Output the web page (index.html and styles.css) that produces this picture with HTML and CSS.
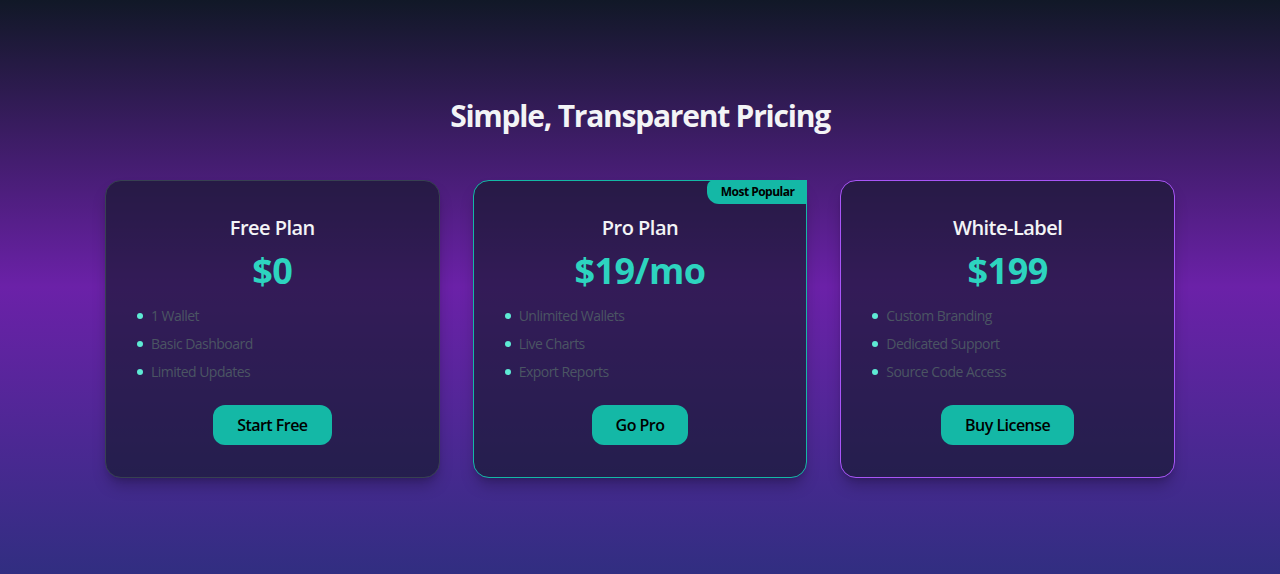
FILE: index.html
```html
<!DOCTYPE html>
<html lang="en">
<head>
<meta charset="utf-8">
<title>Pricing</title>
<link rel="stylesheet" href="styles.css">
</head>
<body>
<section class="pricing">
  <h2 class="heading">Simple, Transparent Pricing</h2>
  <div class="grid">
    <div class="card card-free">
      <h3 class="plan">Free Plan</h3>
      <div class="price">$0</div>
      <ul class="features">
        <li><span class="dot"></span>1 Wallet</li>
        <li><span class="dot"></span>Basic Dashboard</li>
        <li><span class="dot"></span>Limited Updates</li>
      </ul>
      <div class="action"><button class="btn">Start Free</button></div>
    </div>
    <div class="card card-pro">
      <span class="badge">Most Popular</span>
      <h3 class="plan">Pro Plan</h3>
      <div class="price">$19/mo</div>
      <ul class="features">
        <li><span class="dot"></span>Unlimited Wallets</li>
        <li><span class="dot"></span>Live Charts</li>
        <li><span class="dot"></span>Export Reports</li>
      </ul>
      <div class="action"><button class="btn">Go Pro</button></div>
    </div>
    <div class="card card-white">
      <h3 class="plan">White-Label</h3>
      <div class="price">$199</div>
      <ul class="features">
        <li><span class="dot"></span>Custom Branding</li>
        <li><span class="dot"></span>Dedicated Support</li>
        <li><span class="dot"></span>Source Code Access</li>
      </ul>
      <div class="action"><button class="btn">Buy License</button></div>
    </div>
  </div>
</section>
</body>
</html>
```

FILE: styles.css
```css
* { box-sizing: border-box; }
html, body { margin: 0; padding: 0; }
body {
  font-family: "Open Sans", "Noto Sans", sans-serif;
  letter-spacing: -0.033em;
  background: linear-gradient(to bottom, #111827 0%, #6b21a8 50%, #312e81 100%);
  min-height: 574px;
  color: #f3f4f6;
}
.pricing {
  padding: 98px 0 96px;
}
.heading {
  margin: 0 0 46px;
  text-align: center;
  font-size: 30px;
  line-height: 36px;
  font-weight: 700;
  letter-spacing: -0.041em;
  color: #f3f4f6;
}
.grid {
  width: 1070px;
  margin: 0 auto;
  display: grid;
  grid-template-columns: repeat(3, 1fr);
  gap: 33px;
}
.card {
  position: relative;
  background: rgba(17, 24, 39, 0.62);
  border: 1px solid #374151;
  border-radius: 16px;
  padding: 33px 31px 32px;
  text-align: center;
  box-shadow: 0 10px 15px -3px rgba(0,0,0,0.25), 0 4px 6px -4px rgba(0,0,0,0.2);
}
.card-pro { border-color: #14b8a6; }
.card-white { border-color: #a855f7; }
.badge {
  position: absolute;
  top: -1px;
  right: -1px;
  background: #14b8a6;
  color: #000;
  font-size: 12px;
  font-weight: 700;
  line-height: 16px;
  padding: 4px 13px 3px 14px;
  height: 24px;
  border-radius: 7px 0 0 12px;
}
.plan {
  margin: 0 0 9px;
  font-size: 20px;
  line-height: 28px;
  font-weight: 600;
  color: #f3f4f6;
}
.price {
  font-size: 36px;
  line-height: 40px;
  font-weight: 700;
  color: #2dd4bf;
  margin-bottom: 15px;
}
.features {
  list-style: none;
  margin: 0;
  padding: 0;
  text-align: left;
  display: flex;
  flex-direction: column;
  gap: 8px;
}
.features li {
  display: flex;
  align-items: center;
  font-size: 14px;
  line-height: 20px;
  color: #4b5563;
}
.dot {
  width: 6px;
  height: 6px;
  border-radius: 50%;
  background: #5eead4;
  margin-right: 8px;
  flex: none;
}
.action { margin-top: 23px; }
.btn {
  font-family: inherit;
  letter-spacing: inherit;
  border: 0;
  background: #14b8a6;
  color: #000;
  font-size: 16px;
  line-height: 24px;
  font-weight: 600;
  padding: 8px 24px;
  border-radius: 12px;
  cursor: pointer;
}
```
